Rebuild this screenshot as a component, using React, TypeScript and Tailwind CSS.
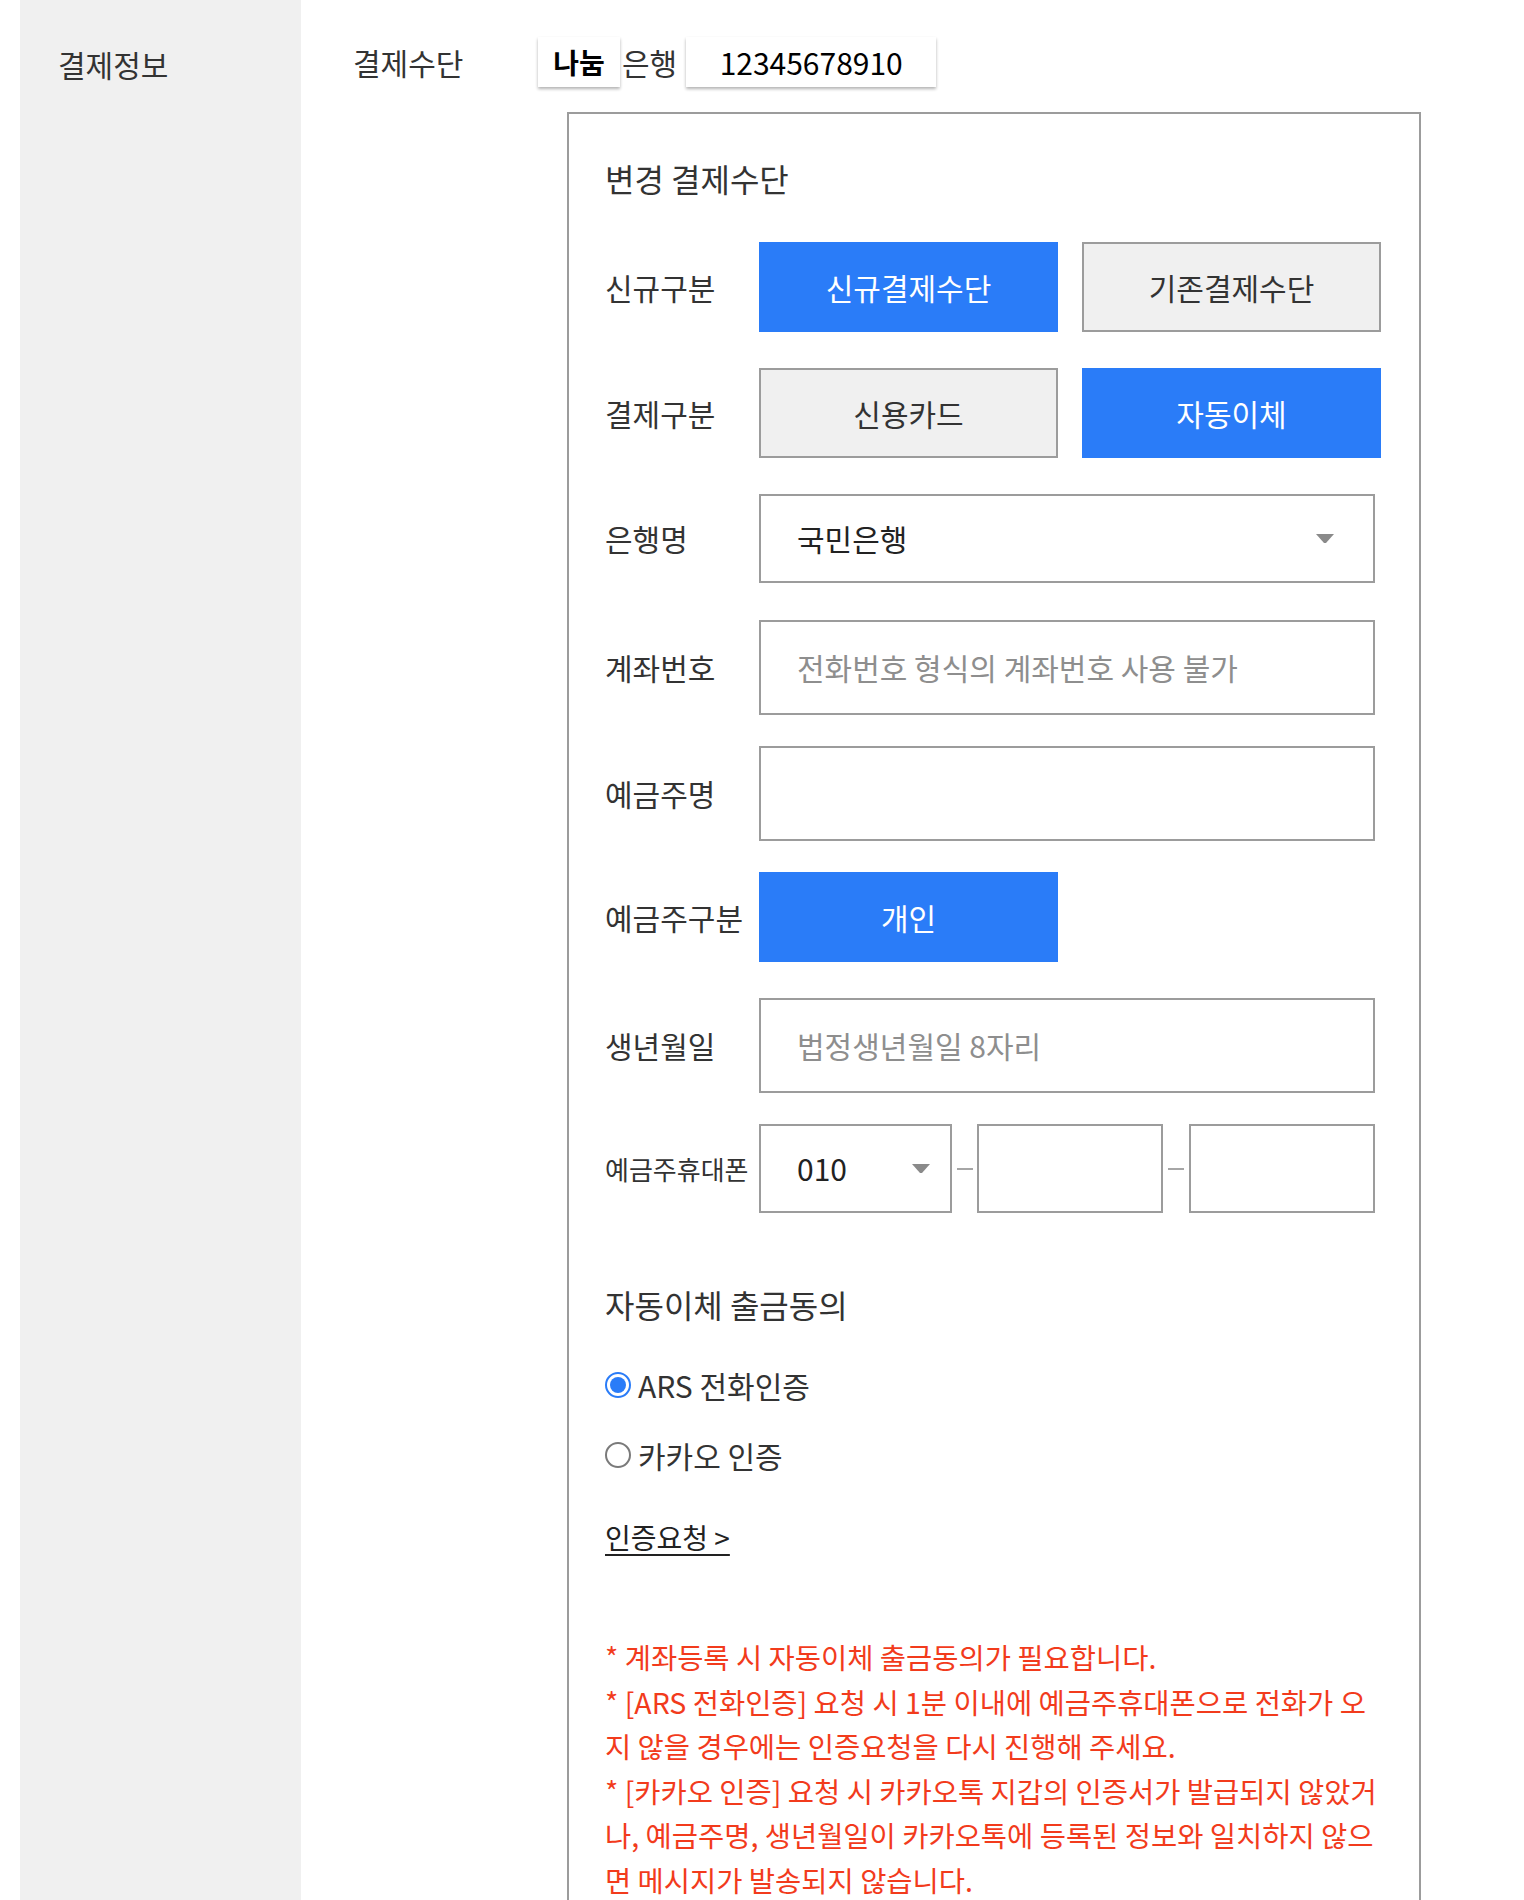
import React, { useState } from 'react';

const Arrow = ({ w = 18, h = 10 }: { w?: number; h?: number }) => (
  <svg width={w} height={h} viewBox="0 0 18 10" className="shrink-0">
    <path d="M0 0 H18 L10 9 H8 Z" fill="#8a8a8a" />
  </svg>
);

const Radio = ({ checked }: { checked: boolean }) =>
  checked ? (
    <span className="w-[26px] h-[26px] rounded-full border-[2px] border-[#2a7cf8] bg-white flex items-center justify-center shrink-0">
      <span className="w-[16px] h-[16px] rounded-full bg-[#2a7cf8]" />
    </span>
  ) : (
    <span className="w-[26px] h-[26px] rounded-full border-[2px] border-[#7a7a7a] bg-white shrink-0" />
  );

const Label = ({ children, small }: { children: React.ReactNode; small?: boolean }) => (
  <div className={`w-[154px] shrink-0 text-[#333] whitespace-nowrap ${small ? 'text-[26px]' : 'text-[30px]'}`}>{children}</div>
);

const ToggleButton = ({ active, children }: { active: boolean; children: React.ReactNode }) => (
  <button
    className={
      active
        ? 'w-[299px] h-[90px] bg-[#2a7cf8] text-white text-[30px] flex items-center justify-center'
        : 'w-[299px] h-[90px] bg-[#f0f0f0] border-2 border-[#9c9c9c] text-[#333] text-[30px] flex items-center justify-center'
    }
  >
    {children}
  </button>
);

const TextBox = ({ placeholder }: { placeholder?: string }) => (
  <div className="w-[616px] h-[95px] border-2 border-[#9c9c9c] flex items-center pl-[36px] text-[30px] text-[#8e8e8e]">
    {placeholder}
  </div>
);

export default function App() {
  const [method, setMethod] = useState<'ars' | 'kakao'>('ars');

  return (
    <div className="min-h-[1900px] bg-white flex font-['Noto_Sans_CJK_KR','Noto_Sans',sans-serif]">
      <div className="w-[20px] shrink-0" />
      <aside className="w-[281px] shrink-0 bg-[#f0f0f0] pt-[43px] pl-[38px]">
        <div className="text-[30px] leading-[42px] text-[#333]">결제정보</div>
      </aside>

      <main className="pl-[52px] pt-[37px] pb-[60px]">
        <div className="flex items-center h-[50px]">
          <div className="w-[185px] text-[30px] text-[#333]">결제수단</div>
          <div className="w-[82px] h-[50px] bg-white shadow-[0_2px_3px_rgba(0,0,0,0.3)] flex items-center justify-center text-[28px] font-semibold text-black">
            나눔
          </div>
          <span className="ml-[2px] text-[30px] text-[#333]">은행</span>
          <div className="ml-[9px] w-[250px] h-[50px] bg-white shadow-[0_2px_3px_rgba(0,0,0,0.3)] flex items-center justify-center text-[30px] text-black">
            12345678910
          </div>
        </div>

        <section className="ml-[214px] mt-[25px] w-[854px] border-2 border-[#9c9c9c] pt-[43px] pl-[36px] pr-[38px] pb-[80px]">
          <h2 className="text-[32px] leading-[42px] text-[#333]">변경 결제수단</h2>

          <div className="flex items-center mt-[43px]">
            <Label>신규구분</Label>
            <div className="flex gap-[24px]">
              <ToggleButton active>신규결제수단</ToggleButton>
              <ToggleButton active={false}>기존결제수단</ToggleButton>
            </div>
          </div>

          <div className="flex items-center mt-[36px]">
            <Label>결제구분</Label>
            <div className="flex gap-[24px]">
              <ToggleButton active={false}>신용카드</ToggleButton>
              <ToggleButton active>자동이체</ToggleButton>
            </div>
          </div>

          <div className="flex items-center mt-[36px]">
            <Label>은행명</Label>
            <div className="w-[616px] h-[89px] border-2 border-[#9c9c9c] flex items-center justify-between pl-[36px] pr-[39px]">
              <span className="text-[30px] text-[#222]">국민은행</span>
              <Arrow />
            </div>
          </div>

          <div className="flex items-center mt-[37px]">
            <Label>계좌번호</Label>
            <TextBox placeholder="전화번호 형식의 계좌번호 사용 불가" />
          </div>

          <div className="flex items-center mt-[31px]">
            <Label>예금주명</Label>
            <TextBox />
          </div>

          <div className="flex items-center mt-[31px]">
            <Label>예금주구분</Label>
            <ToggleButton active>개인</ToggleButton>
          </div>

          <div className="flex items-center mt-[36px]">
            <Label>생년월일</Label>
            <TextBox placeholder="법정생년월일 8자리" />
          </div>

          <div className="flex items-center mt-[31px]">
            <Label small>예금주휴대폰</Label>
            <div className="w-[616px] h-[89px] flex items-center">
              <div className="w-[193px] h-[89px] border-2 border-[#9c9c9c] flex items-center justify-between pl-[36px] pr-[19px]">
                <span className="text-[30px] text-[#222]">010</span>
                <Arrow w={20} h={10} />
              </div>
              <div className="w-[25px] flex justify-center">
                <span className="w-[16px] h-[2px] bg-[#a6a6a6]" />
              </div>
              <div className="w-[186px] h-[89px] border-2 border-[#9c9c9c]" />
              <div className="w-[26px] flex justify-center">
                <span className="w-[16px] h-[2px] bg-[#a6a6a6]" />
              </div>
              <div className="flex-1 h-[89px] border-2 border-[#9c9c9c]" />
            </div>
          </div>

          <h3 className="mt-[69px] text-[32px] leading-[45px] text-[#333]">자동이체 출금동의</h3>

          <label className="mt-[37px] flex items-center gap-[7px] h-[42px] cursor-pointer" onClick={() => setMethod('ars')}>
            <Radio checked={method === 'ars'} />
            <span className="text-[30px] text-[#333]">ARS 전화인증</span>
          </label>
          <label className="mt-[28px] flex items-center gap-[7px] h-[42px] cursor-pointer" onClick={() => setMethod('kakao')}>
            <Radio checked={method === 'kakao'} />
            <span className="text-[30px] text-[#333]">카카오 인증</span>
          </label>

          <a href="#" className="mt-[41px] inline-block text-[28px] leading-[40px] text-[#222] underline underline-offset-[5px]">
            인증요청 &gt;
          </a>

          <div className="mt-[78px] text-[28.5px] leading-[44.6px] text-[#f23b1c]">
            <p>* 계좌등록 시 자동이체 출금동의가 필요합니다.</p>
            <p>* [ARS 전화인증] 요청 시 1분 이내에 예금주휴대폰으로 전화가 오지 않을 경우에는 인증요청을 다시 진행해 주세요.</p>
            <p>* [카카오 인증] 요청 시 카카오톡 지갑의 인증서가 발급되지 않았거나, 예금주명, 생년월일이 카카오톡에 등록된 정보와 일치하지 않으면 메시지가 발송되지 않습니다.</p>
          </div>
        </section>
      </main>
    </div>
  );
}
